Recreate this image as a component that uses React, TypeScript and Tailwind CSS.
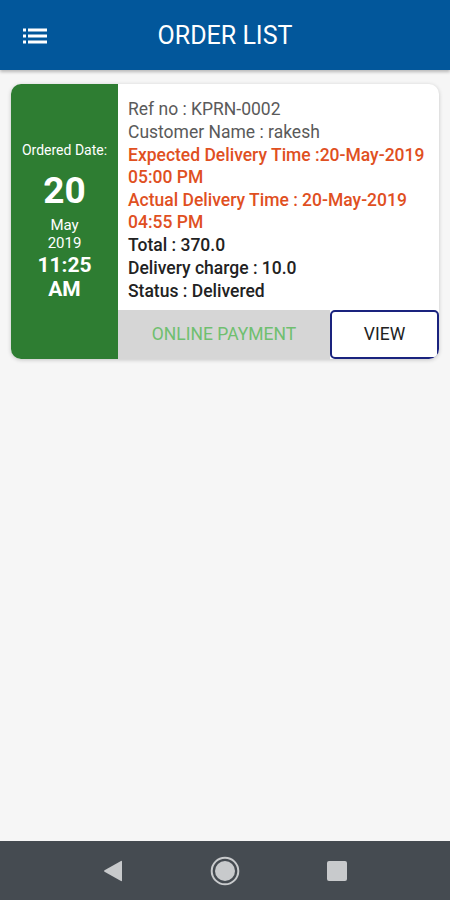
import React from "react";

export default function App() {
  return (
    <div className="w-[450px] h-[900px] flex flex-col bg-[#f6f6f6] overflow-hidden" style={{ fontFamily: "Roboto, 'Noto Sans', sans-serif" }}>
      <div className="h-[70px] shrink-0 bg-[#02579b] relative flex items-center justify-center shadow-[0_2px_3px_rgba(0,0,0,0.25)] z-10">
        <svg className="absolute left-[23px] top-[28px]" width="24" height="16" viewBox="0 0 24 16">
          <rect x="0" y="0.5" width="3" height="3" fill="#fff" />
          <rect x="0" y="6.5" width="3" height="3" fill="#fff" />
          <rect x="0" y="12.5" width="3" height="3" fill="#fff" />
          <rect x="5" y="0.5" width="19" height="3" fill="#fff" />
          <rect x="5" y="6.5" width="19" height="3" fill="#fff" />
          <rect x="5" y="12.5" width="19" height="3" fill="#fff" />
        </svg>
        <span className="text-white text-[25px] leading-none">ORDER LIST</span>
      </div>

      <div className="flex-1 px-[11px] pt-[14px]">
        <div className="flex rounded-[10px] bg-white shadow-[0_1px_4px_rgba(0,0,0,0.2)] overflow-hidden h-[275px]">
          <div className="w-[107px] shrink-0 bg-[#2e7d32] flex flex-col items-center pt-[58px] text-white">
            <div className="text-[14px] leading-[16px]">Ordered Date:</div>
            <div className="text-[37px] font-bold leading-[40px] mt-[13px]">20</div>
            <div className="text-[15px] leading-[18px] mt-[5px]">May</div>
            <div className="text-[15px] leading-[18px]">2019</div>
            <div className="text-[21px] font-bold leading-[24px] mt-[1px]">11:25</div>
            <div className="text-[21px] font-bold leading-[24px]">AM</div>
          </div>
          <div className="flex-1 flex flex-col">
            <div className="flex-1 pl-[10px] pt-[14px] text-[17.5px] leading-[22px] flex flex-col gap-[1px]">
              <div className="text-[#5a5a5a]">Ref no : KPRN-0002</div>
              <div className="text-[#5a5a5a]">Customer Name : rakesh</div>
              <div className="text-[#e0501f] font-medium">Expected Delivery Time :20-May-2019<br />05:00 PM</div>
              <div className="text-[#e0501f] font-medium">Actual Delivery Time : 20-May-2019<br />04:55 PM</div>
              <div className="text-[#222] font-medium">Total : 370.0</div>
              <div className="text-[#222] font-medium">Delivery charge : 10.0</div>
              <div className="text-[#222] font-medium">Status : Delivered</div>
            </div>
            <div className="h-[49px] flex shrink-0">
              <div className="flex-1 bg-[#d6d6d6] flex items-center justify-center text-[17.5px] text-[#6fbf6f]">ONLINE PAYMENT</div>
              <div className="w-[109px] border-2 border-[#1a237e] rounded-[5px] bg-white flex items-center justify-center text-[17.5px] text-[#222]">VIEW</div>
            </div>
          </div>
        </div>
      </div>

      <div className="h-[59px] shrink-0 bg-[#454b51] flex items-center justify-center">
        <div className="flex items-center w-[244px] justify-between">
          <svg width="20" height="22" viewBox="0 0 20 22">
            <path d="M19 1.5 L19 20.5 Q19 21.5 18 21 L1.5 11.8 Q0.5 11 1.5 10.2 L18 1 Q19 0.5 19 1.5 Z" fill="#c8cacc" />
          </svg>
          <svg width="30" height="30" viewBox="0 0 30 30">
            <circle cx="15" cy="15" r="13.3" fill="none" stroke="#c8cacc" strokeWidth="2" />
            <circle cx="15" cy="15" r="10" fill="#c8cacc" />
          </svg>
          <svg width="20" height="20" viewBox="0 0 20 20">
            <rect x="0" y="0" width="20" height="20" rx="2" fill="#c8cacc" />
          </svg>
        </div>
      </div>
    </div>
  );
}
